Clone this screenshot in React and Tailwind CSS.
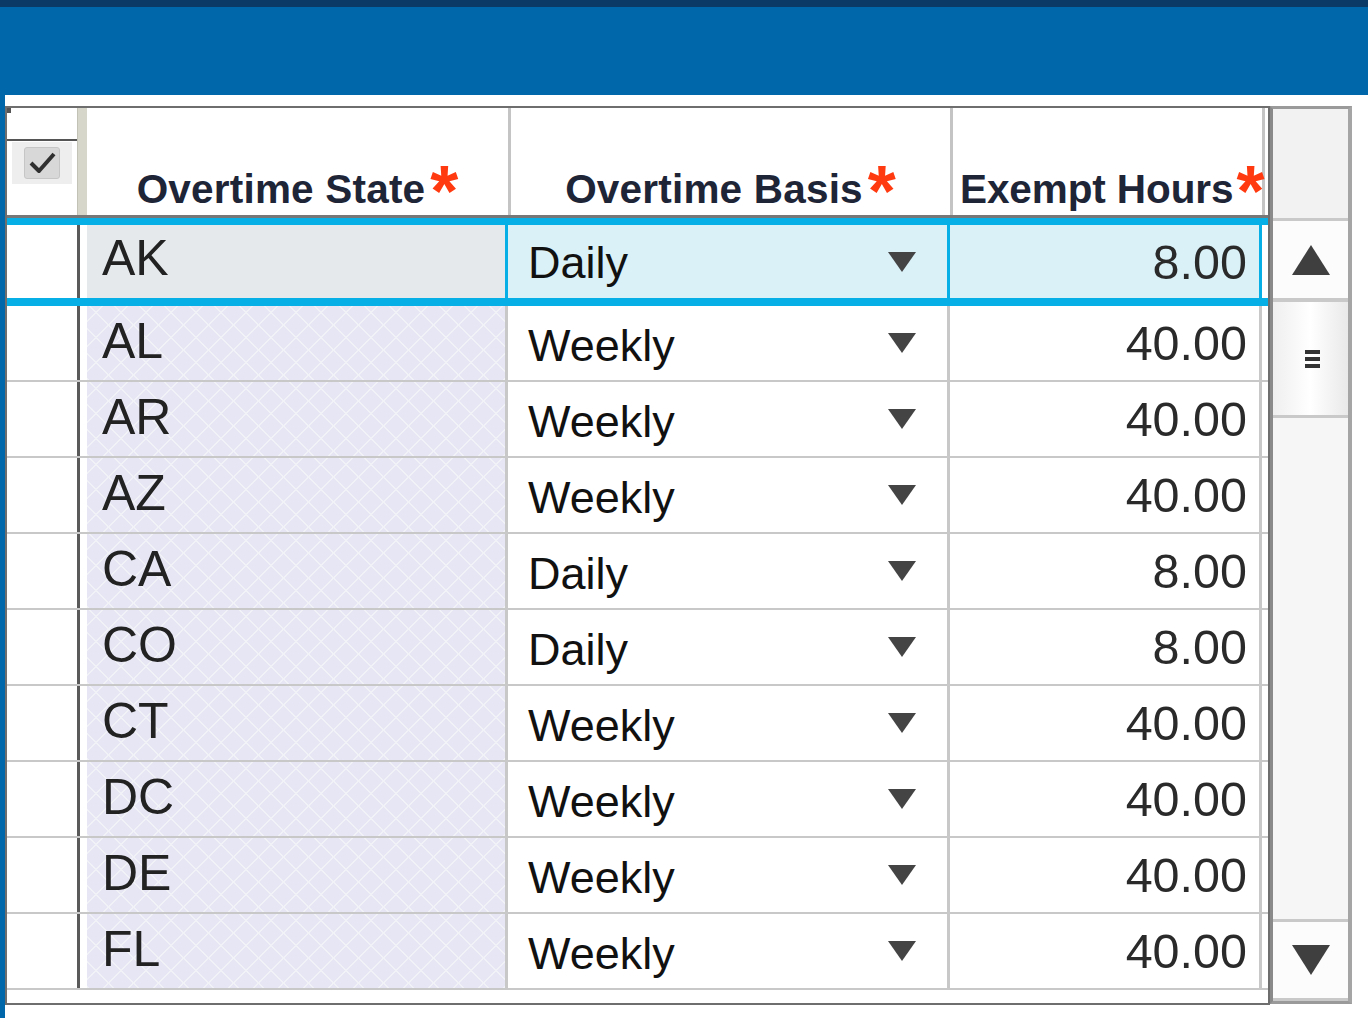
import React from "react";

const rows = [
  ["AL", "Weekly", "40.00"],
  ["AR", "Weekly", "40.00"],
  ["AZ", "Weekly", "40.00"],
  ["CA", "Daily", "8.00"],
  ["CO", "Daily", "8.00"],
  ["CT", "Weekly", "40.00"],
  ["DC", "Weekly", "40.00"],
  ["DE", "Weekly", "40.00"],
  ["FL", "Weekly", "40.00"],
];

const pattern =
  "bg-[#e6e6f5] bg-[image:repeating-linear-gradient(45deg,#f1f1f8_0px,#f1f1f8_1.5px,transparent_1.5px,transparent_17.7px),repeating-linear-gradient(-45deg,#f1f1f8_0px,#f1f1f8_1.5px,transparent_1.5px,transparent_17.7px)]";

function DownTri({ w = 30, h = 22 }) {
  return (
    <svg width={w} height={h} viewBox="0 0 30 22" className="shrink-0">
      <polygon points="1,1 29,1 15,21" fill="#444444" />
    </svg>
  );
}

function UpTri() {
  return (
    <svg width="40" height="32" viewBox="0 0 40 32">
      <polygon points="20,1 39,31 1,31" fill="#3f3f3f" />
    </svg>
  );
}

function BigDownTri() {
  return (
    <svg width="40" height="32" viewBox="0 0 40 32">
      <polygon points="1,1 39,1 20,31" fill="#3f3f3f" />
    </svg>
  );
}

function Star({ ml = "ml-[5px]" }) {
  return (
    <span className={`self-start mt-[47px] ${ml} text-[72px] leading-none font-bold text-[#ff3a10]`}>*</span>
  );
}

function HeadText({ children, track = "tracking-[0.2px]" }) {
  return (
    <span className={`text-[40.5px] leading-[40px] font-bold text-[#1e2536] ${track}`}>{children}</span>
  );
}

function DataRow({ st, basis, hrs }) {
  return (
    <div className="flex h-[76px] border-b-2 border-[#c8c8c8]">
      <div className="w-[70px] bg-white" />
      <div className="w-[3px] bg-[#5a5a5a]" />
      <div className="w-[428px] flex bg-white border-r-[3px] border-[#c8c8c8]">
        <div className={`ml-[7px] flex-1 flex items-center pl-[15px] ${pattern}`}>
          <span className="text-[50px] leading-[50px] text-[#222] -mt-[4px]">{st}</span>
        </div>
      </div>
      <div className="w-[442px] flex items-center justify-between pl-[20px] pr-[30px] border-r-[3px] border-[#c8c8c8]">
        <span className="text-[45px] leading-[44px] text-[#111] mt-[6px]">{basis}</span>
        <DownTri />
      </div>
      <div className="w-[312px] flex items-center justify-end pr-[12px] border-r-[3px] border-[#c8c8c8]">
        <span className="text-[48.5px] leading-[48px] text-[#2a2a2a]">{hrs}</span>
      </div>
    </div>
  );
}

export default function App() {
  return (
    <div className="w-[1368px] h-[1018px] bg-white overflow-hidden flex flex-col font-['Liberation_Sans',Arial,sans-serif]">
      <div className="h-[95px] shrink-0 bg-[#0067ab] border-t-[7px] border-[#0b3a66]" />
      <div className="flex flex-1">
        <div className="w-[5px] bg-[#0067ab]" />
        <div className="flex items-start pt-[11px]">
          {/* table */}
          <div className="w-[1265px] border-2 border-[#6e6e6e] bg-white">
            {/* header */}
            <div className="flex h-[110px] border-b-[3px] border-[#777]">
              <div className="w-[70px] flex flex-col">
                <div className="relative h-[33px] border-b-2 border-[#555]">
                  <div className="absolute left-0 top-0 w-[4px] h-[5px] bg-[#555]" />
                </div>
                <div className="flex-1 flex items-start justify-center pt-[1px]">
                  <div className="w-[60px] h-[42px] bg-[#eeeeee] flex items-center justify-center">
                    <div className="w-[36px] h-[32px] rounded-[3px] bg-[#d8d8d8] border border-[#c6c6c6] flex items-center justify-center">
                      <svg width="30" height="26" viewBox="0 0 30 26">
                        <path d="M4 13 L12 21 L27 4" fill="none" stroke="#303030" strokeWidth="4" strokeLinejoin="round" />
                      </svg>
                    </div>
                  </div>
                </div>
              </div>
              <div className="w-[10px] bg-[#d6d6cb] border-l border-[#c2c2b6]" />
              <div className="w-[424px] flex items-end justify-center pb-[6px] border-r-[3px] border-[#c4c4c4]">
                <HeadText>Overtime State</HeadText>
                <Star />
              </div>
              <div className="w-[442px] flex items-end justify-center pb-[6px] border-r-[3px] border-[#c4c4c4]">
                <HeadText>Overtime Basis</HeadText>
                <Star />
              </div>
              <div className="w-[312px] flex items-end justify-start pl-[7px] pb-[6px] border-r-[3px] border-[#c4c4c4] whitespace-nowrap">
                <HeadText track="tracking-[-0.1px]">Exempt Hours</HeadText>
                <Star ml="ml-[3px]" />
              </div>
            </div>

            {/* selected row */}
            <div className="flex h-[88px] border-t-[7px] border-b-[8px] border-[#06b0e6]">
              <div className="w-[70px] bg-white" />
              <div className="w-[3px] bg-[#5a5a5a]" />
              <div className="w-[428px] flex bg-white border-r-[3px] border-[#06b0e6]">
                <div className="ml-[7px] flex-1 flex items-center pl-[15px] bg-[#e5e9ec]">
                  <span className="text-[50px] leading-[50px] text-[#222] -mt-[8px]">AK</span>
                </div>
              </div>
              <div className="w-[442px] flex items-center justify-between pl-[20px] pr-[30px] bg-[#daf1f8] border-r-[3px] border-[#06b0e6]">
                <span className="text-[45px] leading-[44px] text-[#111] mt-[2px]">Daily</span>
                <DownTri />
              </div>
              <div className="w-[312px] flex items-center justify-end pr-[12px] bg-[#daf1f8] border-r-[3px] border-[#06b0e6]">
                <span className="text-[48.5px] leading-[48px] text-[#2a2a2a]">8.00</span>
              </div>
            </div>

            {rows.map((r) => (
              <DataRow key={r[0]} st={r[0]} basis={r[1]} hrs={r[2]} />
            ))}
            <div className="h-[13px]" />
          </div>

          {/* scrollbar */}
          <div className="w-[82px] h-[898px] flex flex-col border-t-[3px] border-b-[3px] border-l-[3px] border-r-[4px] border-t-[#9a9a9a] border-b-[#9a9a9a] border-l-[#8a8a8a] border-r-[#a5a5a5]">
            <div className="h-[112px] shrink-0 bg-[#f3f2f3] border-b-[3px] border-[#c9c9c9]" />
            <div className="h-[81px] shrink-0 bg-[#fcfcfc] border-b-[4px] border-[#c9c9c9] flex items-center justify-center">
              <UpTri />
            </div>
            <div className="h-[116px] shrink-0 bg-gradient-to-r from-[#efefef] via-white to-[#e9e9e9] border-b-[3px] border-[#c9c9c9] flex items-center justify-center pl-[4px]">
              <div className="flex flex-col gap-[3px]">
                <div className="w-[15px] h-[4px] bg-[#333]" />
                <div className="w-[15px] h-[4px] bg-[#333]" />
                <div className="w-[15px] h-[4px] bg-[#333]" />
              </div>
            </div>
            <div className="flex-1 bg-[#f6f6f6]" />
            <div className="h-[82px] shrink-0 bg-[#fcfcfc] border-t-[3px] border-b-[3px] border-[#c9c9c9] flex items-center justify-center">
              <BigDownTri />
            </div>
          </div>
        </div>
      </div>
    </div>
  );
}
